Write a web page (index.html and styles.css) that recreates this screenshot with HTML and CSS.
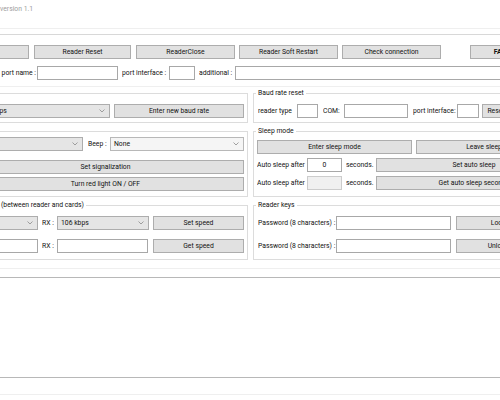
FILE: index.html
```html
<!DOCTYPE html>
<html>
<head>
<meta charset="utf-8">
<link rel="stylesheet" href="styles.css">
</head>
<body>
<div class="frame">
  <div class="titlebar">version 1.1</div>
  <div class="rule faint"></div>
  <div class="rule gray r2"></div>

  <div class="toprow btnrow">
    <button class="btn w99">Reader Open</button>
    <button class="btn w97 ml5">Reader Reset</button>
    <button class="btn w99 ml5">ReaderClose</button>
    <button class="btn w99 ml4">Reader Soft Restart</button>
    <button class="btn w99 ml4">Check connection</button>
    <button class="btn w99 ml29 bold">FACTORY RESET</button>
  </div>

  <div class="toprow portrow">
    <span class="lbl right w107">port name :</span>
    <input class="field w81" type="text">
    <span class="lbl w47 ml4">port interface :</span>
    <input class="field w26" type="text">
    <span class="lbl w36 ml4">additional :</span>
    <input class="field grow" type="text">
  </div>

  <div class="rule faint r3"></div>

  <div class="columns">
    <fieldset class="group left g1">
      <legend>Baud rate</legend>
      <div class="row">
        <div class="combo grow"><span>115200 bps</span><svg class="chev" width="6" height="4" viewBox="0 0 6 4"><path d="M0.5 0.5 L3 3 L5.5 0.5" fill="none" stroke="#8a8a8a" stroke-width="0.8"/></svg></div>
        <button class="btn w130 ml4">Enter new baud rate</button>
      </div>
    </fieldset>

    <fieldset class="group right g1">
      <legend>Baud rate reset</legend>
      <div class="row">
        <span class="lbl w39 ml1">reader type</span>
        <input class="field w21" type="text">
        <span class="lbl w21 ml5">COM:</span>
        <input class="field w64" type="text">
        <span class="lbl w44 ml5">port interface:</span>
        <input class="field w22" type="text">
        <button class="btn w28 ml3">Reset</button>
      </div>
    </fieldset>

    <fieldset class="group left g2">
      <legend>Signal</legend>
      <div class="row">
        <div class="combo grow"><span>None</span><svg class="chev" width="6" height="4" viewBox="0 0 6 4"><path d="M0.5 0.5 L3 3 L5.5 0.5" fill="none" stroke="#8a8a8a" stroke-width="0.8"/></svg></div>
        <span class="lbl w22 ml5">Beep :</span>
        <div class="combo w134 light"><span>None</span><svg class="chev" width="6" height="4" viewBox="0 0 6 4"><path d="M0.5 0.5 L3 3 L5.5 0.5" fill="none" stroke="#8a8a8a" stroke-width="0.8"/></svg></div>
      </div>
      <button class="btn full sig1">Set signalization</button>
      <button class="btn full sig2">Turn red light ON / OFF</button>
    </fieldset>

    <fieldset class="group right g2">
      <legend>Sleep mode</legend>
      <div class="row">
        <button class="btn w155">Enter sleep mode</button>
        <button class="btn w155 ml4">Leave sleep mode</button>
      </div>
      <div class="row srow">
        <span class="lbl w50">Auto sleep after</span>
        <input class="field w35 center" type="text" value="0">
        <span class="lbl w30 ml4">seconds.</span>
        <button class="btn w196">Set auto sleep</button>
      </div>
      <div class="row srow">
        <span class="lbl w50">Auto sleep after</span>
        <input class="field w35 disabled" type="text" disabled>
        <span class="lbl w30 ml4">seconds.</span>
        <button class="btn w196">Get auto sleep seconds</button>
      </div>
    </fieldset>

    <fieldset class="group left g3">
      <legend class="speedlegend">(between reader and cards)</legend>
      <div class="row">
        <div class="combo grow"><span>106 kbps</span><svg class="chev" width="6" height="4" viewBox="0 0 6 4"><path d="M0.5 0.5 L3 3 L5.5 0.5" fill="none" stroke="#8a8a8a" stroke-width="0.8"/></svg></div>
        <span class="lbl w15 ml4">RX :</span>
        <div class="combo w92"><span>106 kbps</span><svg class="chev" width="6" height="4" viewBox="0 0 6 4"><path d="M0.5 0.5 L3 3 L5.5 0.5" fill="none" stroke="#8a8a8a" stroke-width="0.8"/></svg></div>
        <button class="btn w91 ml4">Set speed</button>
      </div>
      <div class="row krow">
        <input class="field grow" type="text">
        <span class="lbl w15 ml4">RX :</span>
        <input class="field w91" type="text">
        <button class="btn w91 ml5">Get speed</button>
      </div>
    </fieldset>

    <fieldset class="group right g3">
      <legend>Reader keys</legend>
      <div class="row">
        <span class="lbl w78 ml1">Password (8 characters) :</span>
        <input class="field w115" type="password">
        <button class="btn w84 ml5">Lock</button>
      </div>
      <div class="row krow">
        <span class="lbl w78 ml1">Password (8 characters) :</span>
        <input class="field w115" type="password">
        <button class="btn w84 ml5">Unlock</button>
      </div>
    </fieldset>
  </div>

  <div class="rule faint r4"></div>
  <div class="log"></div>
  <div class="rule faint r5"></div>
</div>
</body>
</html>
```

FILE: styles.css
```css
html, body {
  margin: 0;
  padding: 0;
  width: 500px;
  height: 400px;
  overflow: hidden;
  background: #ffffff;
}

body {
  font-family: Roboto, "Liberation Sans", sans-serif;
  font-size: 6.8px;
  color: #111111;
}

.frame {
  margin-left: -70px;
  width: 640px;
}

.titlebar {
  height: 28px;
  box-sizing: border-box;
  padding: 4px 0 0 70px;
  line-height: 10px;
  color: #9d9d9d;
}

.rule { height: 1px; }
.rule.faint { background: #efefef; }
.rule.gray { background: #d8d8d8; }
.r2 { margin-top: 5px; }
.r3 { margin-top: 6px; }
.r4 { margin-top: 8px; }
.r5 { margin-top: 16px; }

.toprow {
  display: flex;
  align-items: center;
  height: 14px;
}
.btnrow { margin-top: 10px; }
.portrow { margin-top: 7px; }

.row {
  display: flex;
  align-items: center;
  height: 14px;
}

.btn {
  flex: none;
  height: 14px;
  box-sizing: border-box;
  margin: 0;
  padding: 0;
  background: #e1e1e1;
  border: 1px solid #adadad;
  font-family: inherit;
  font-size: 6.8px;
  line-height: 12px;
  color: #111111;
  white-space: nowrap;
  overflow: hidden;
  text-align: center;
}
.btn.bold { font-weight: bold; }
.btn.full { display: block; width: 100%; }
.sig1 { margin-top: 9px; }
.sig2 { margin-top: 3px; }

.field {
  flex: none;
  height: 14px;
  box-sizing: border-box;
  margin: 0;
  padding: 0 2px;
  border: 1px solid #a8a8a8;
  background: #ffffff;
  font-family: inherit;
  font-size: 6.8px;
  color: #111111;
  outline: none;
}
.field.center { text-align: center; }
.field.disabled { background: #f0f0f0; border-color: #cccccc; }

.combo {
  flex: none;
  height: 14px;
  box-sizing: border-box;
  padding: 0 3px;
  border: 1px solid #adadad;
  background: #e5e5e5;
  display: flex;
  align-items: center;
  justify-content: space-between;
  white-space: nowrap;
  overflow: hidden;
}
.combo.light { background: #f5f5f5; border-color: #b8b8b8; }
.chev { flex: none; margin-right: 1px; }

.lbl {
  flex: none;
  white-space: nowrap;
  overflow: hidden;
  line-height: 14px;
}
.lbl.right { text-align: right; padding-right: 1px; box-sizing: border-box; }

.grow { flex: 1 1 auto; min-width: 0; width: 0; }

.w15 { width: 15px; }
.w21 { width: 21px; }
.w22 { width: 22px; }
.w26 { width: 26px; }
.w28 { width: 28px; }
.w30 { width: 30px; }
.w35 { width: 35px; }
.w36 { width: 36px; }
.w39 { width: 39px; }
.w44 { width: 44px; }
.w47 { width: 47px; }
.w50 { width: 50px; }
.w64 { width: 64px; }
.w78 { width: 78px; }
.w81 { width: 81px; }
.w84 { width: 84px; }
.w91 { width: 91px; }
.w92 { width: 92px; }
.w97 { width: 97px; }
.w99 { width: 99px; }
.w107 { width: 107px; }
.w115 { width: 115px; }
.w130 { width: 130px; }
.w134 { width: 134px; }
.w155 { width: 155px; }
.w196 { width: 196px; }

.ml1 { margin-left: 1px; }
.ml3 { margin-left: 3px; }
.ml4 { margin-left: 4px; }
.ml5 { margin-left: 5px; }
.ml29 { margin-left: 29px; }

.columns {
  display: grid;
  grid-template-columns: 288px 317px;
  grid-template-rows: 34px 70px 59px;
  column-gap: 5px;
  row-gap: 4px;
  margin-top: 2px;
  margin-left: 30px;
}

.group {
  margin: 0;
  min-width: 0;
  box-sizing: border-box;
  height: 100%;
  border: 1px solid #dcdcdc;
}
.group legend {
  padding: 0 2px;
  margin-left: -1px;
  font-size: 6.8px;
  line-height: 8px;
  color: #111111;
}
.group.left { grid-column: 1; padding: 7px 3px 0 6px; }
.group.right { grid-column: 2; padding: 7px 0 0 3px; }
.g1 { grid-row: 1; }
.g2 { grid-row: 2; }
.g3 { grid-row: 3; }
.group.g2.left { padding-top: 2px; }
.group.g2.right { padding-top: 5px; }
.srow { margin-top: 4px; }
.krow { margin-top: 9px; }

.group legend.speedlegend { margin-left: 32px; }

.log {
  margin-top: 8px;
  height: 101px;
  box-sizing: border-box;
  border-top: 1px solid #b8b8b8;
  border-bottom: 1px solid #b8b8b8;
  background: #ffffff;
}
```
